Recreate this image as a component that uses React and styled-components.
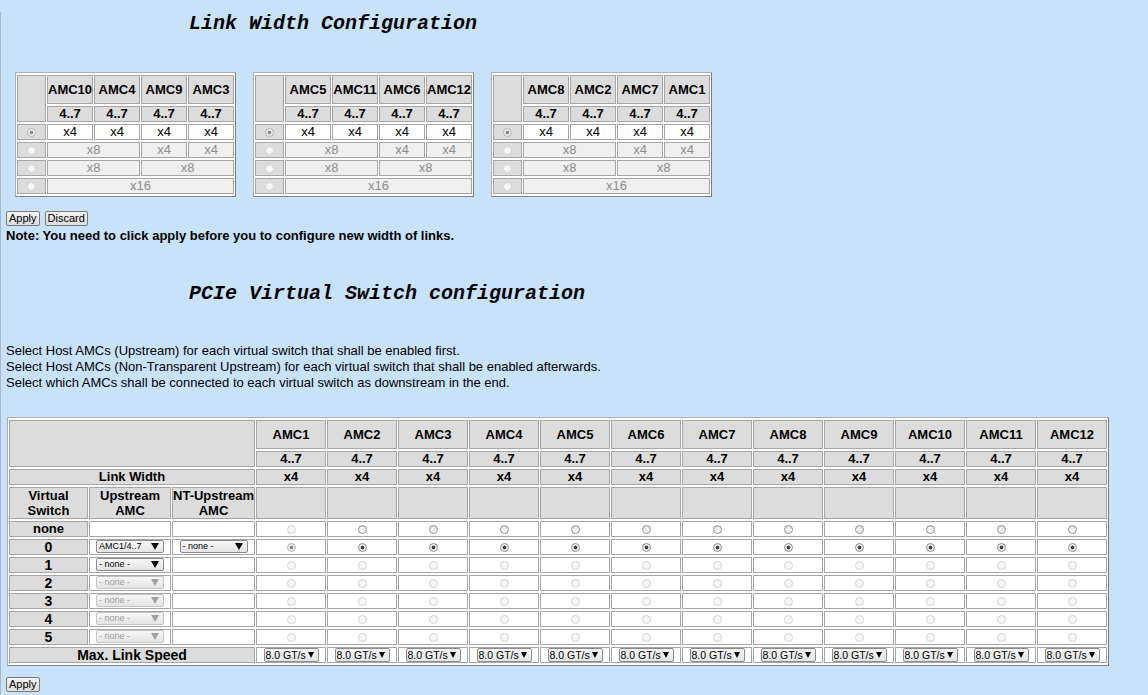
import React from "react";
import styled, { createGlobalStyle } from "styled-components";

const GlobalStyle = createGlobalStyle`
  html, body {
    margin: 0;
    padding: 0;
    background: #c9e2fb;
  }
  body {
    font-family: "Liberation Sans", Arial, sans-serif;
    font-size: 13px;
    color: #000;
  }
`;

const widthGroups = [
  ["AMC10", "AMC4", "AMC9", "AMC3"],
  ["AMC5", "AMC11", "AMC6", "AMC12"],
  ["AMC8", "AMC2", "AMC7", "AMC1"],
];

const amcs = Array.from({ length: 12 }, (_, i) => `AMC${i + 1}`);
const switches = ["none", "0", "1", "2", "3", "4", "5"];

const LinkWidthTable = ({ names }) => {
  return (
    <SmallTable>
      <colgroup>
        <Col $w={29} />
        {names.map((n) => (
          <Col key={n} $w={46} />
        ))}
      </colgroup>
      <tbody>
        <Row $h={29}>
          <Cell rowSpan={2} $tone="head" />
          {names.map((n) => (
            <Cell key={n} $tone="head" $bold>
              {n}
            </Cell>
          ))}
        </Row>
        <Row $h={16}>
          {names.map((n) => (
            <Cell key={n} $tone="head" $bold>
              4..7
            </Cell>
          ))}
        </Row>
        <Row $h={16}>
          <Cell $tone="head">
            <Radio $checked $dim />
          </Cell>
          {names.map((n) => (
            <Cell key={n} $tone="white">
              x4
            </Cell>
          ))}
        </Row>
        <Row $h={16}>
          <Cell $tone="head">
            <Radio $faint />
          </Cell>
          <Cell colSpan={2} $tone="light">
            x8
          </Cell>
          <Cell $tone="light">x4</Cell>
          <Cell $tone="light">x4</Cell>
        </Row>
        <Row $h={16}>
          <Cell $tone="head">
            <Radio $faint />
          </Cell>
          <Cell colSpan={2} $tone="light">
            x8
          </Cell>
          <Cell colSpan={2} $tone="light">
            x8
          </Cell>
        </Row>
        <Row $h={16}>
          <Cell $tone="head">
            <Radio $faint />
          </Cell>
          <Cell colSpan={4} $tone="light">
            x16
          </Cell>
        </Row>
      </tbody>
    </SmallTable>
  );
};

const FakeSelect = ({ label, width, disabled, big }) => (
  <Select $w={width} $disabled={disabled} $big={big}>
    <span>{label}</span>
    <Arrow $disabled={disabled} $big={big} />
  </Select>
);

const App = () => {
  return (
    <>
      <GlobalStyle />
      <Page>
        <Title $top={12}>Link Width Configuration</Title>

        <SmallTables>
          {widthGroups.map((g) => (
            <LinkWidthTable key={g[0]} names={g} />
          ))}
        </SmallTables>

        <ButtonRow $top={14}>
          <Button>Apply</Button>
          <Button>Discard</Button>
        </ButtonRow>
        <Note>
          Note: You need to click apply before you to configure new width of
          links.
        </Note>

        <Title $top={39}>PCIe Virtual Switch configuration</Title>

        <Intro>
          Select Host AMCs (Upstream) for each virtual switch that shall be
          enabled first.
          <br />
          Select Host AMCs (Non-Transparent Upstream) for each virtual switch
          that shall be enabled afterwards.
          <br />
          Select which AMCs shall be connected to each virtual switch as
          downstream in the end.
        </Intro>

        <SwitchTable>
          <colgroup>
            <Col $w={79} />
            <Col $w={82} />
            <Col $w={83} />
            {amcs.map((a) => (
              <Col key={a} $w={70} />
            ))}
          </colgroup>
          <tbody>
            <Row $h={29}>
              <Cell colSpan={3} rowSpan={2} $tone="head" />
              {amcs.map((a) => (
                <Cell key={a} $tone="head" $bold>
                  {a}
                </Cell>
              ))}
            </Row>
            <Row $h={16}>
              {amcs.map((a) => (
                <Cell key={a} $tone="head" $bold>
                  4..7
                </Cell>
              ))}
            </Row>
            <Row $h={16}>
              <Cell colSpan={3} $tone="head" $bold>
                Link Width
              </Cell>
              {amcs.map((a) => (
                <Cell key={a} $tone="head" $bold>
                  x4
                </Cell>
              ))}
            </Row>
            <Row $h={31}>
              <Cell $tone="head" $bold $multi>
                Virtual
                <br />
                Switch
              </Cell>
              <Cell $tone="head" $bold $multi>
                Upstream
                <br />
                AMC
              </Cell>
              <Cell $tone="head" $bold $multi>
                NT-Upstream
                <br />
                AMC
              </Cell>
              {amcs.map((a) => (
                <Cell key={a} $tone="head" />
              ))}
            </Row>
            {switches.map((s) => (
              <Row key={s} $h={16}>
                <Cell $tone="head" $bold $large={s !== "none"}>
                  {s}
                </Cell>
                <Cell $tone="white">
                  {s === "0" && <FakeSelect label="AMC1/4..7" width={68} />}
                  {s !== "0" && s !== "none" && (
                    <FakeSelect
                      label="- none -"
                      width={68}
                      disabled={s !== "1"}
                    />
                  )}
                </Cell>
                <Cell $tone="white">
                  {s === "0" && <FakeSelect label="- none -" width={68} />}
                </Cell>
                {amcs.map((a, i) => (
                  <Cell key={a} $tone="white">
                    {s === "none" && <Radio $faint={i === 0} />}
                    {s === "0" && <Radio $checked $dim={i === 0} />}
                    {s !== "none" && s !== "0" && <Radio $faint />}
                  </Cell>
                ))}
              </Row>
            ))}
            <Row $h={16}>
              <Cell colSpan={3} $tone="head" $bold $large>
                Max. Link Speed
              </Cell>
              {amcs.map((a) => (
                <Cell key={a} $tone="white">
                  <FakeSelect label="8.0 GT/s" width={55} big />
                </Cell>
              ))}
            </Row>
          </tbody>
        </SwitchTable>

        <ButtonRow $top={11}>
          <Button>Apply</Button>
        </ButtonRow>
      </Page>
    </>
  );
};

const Page = styled.div`
  box-sizing: border-box;
  min-height: 695px;
  border-left: 1px solid #a9b6c4;
  padding: 0 5px 8px;
`;

const Title = styled.h2`
  margin: ${(p) => p.$top}px 0 0;
  padding-left: 183px;
  font-family: "Liberation Mono", "Courier New", monospace;
  font-style: italic;
  font-weight: bold;
  font-size: 20px;
  line-height: 23px;
`;

const SmallTables = styled.div`
  display: flex;
  gap: 17px;
  margin: 37px 0 0 9px;
`;

const tones = {
  head: "#dcdcdc",
  white: "#ffffff",
  light: "#efefef",
};

const BaseTable = styled.table`
  table-layout: fixed;
  border-collapse: separate;
  border-spacing: 1px 2px;
  background: #fff;
  border: 1px solid;
  border-color: #b0b0b0 #7f7f7f #7f7f7f #b0b0b0;
`;

const SmallTable = styled(BaseTable)`
  width: 221px;
`;

const SwitchTable = styled(BaseTable)`
  width: 1102px;
  margin: 26px 0 0 1px;
`;

const Col = styled.col`
  width: ${(p) => p.$w}px;
`;

const Row = styled.tr`
  height: ${(p) => p.$h}px;
`;

const Cell = styled.td`
  box-sizing: border-box;
  padding: 0;
  border: 1px solid #a6a6a6;
  background: ${(p) => tones[p.$tone]};
  color: ${(p) => (p.$tone === "light" ? "#8c8c8c" : "#000")};
  font-weight: ${(p) => (p.$bold ? "bold" : "normal")};
  font-size: ${(p) => (p.$large ? "14px" : "13px")};
  line-height: ${(p) => (p.$multi ? "15px" : "14px")};
  text-align: center;
  vertical-align: middle;
  white-space: nowrap;
  overflow: hidden;
`;

const Radio = styled.span`
  display: inline-block;
  box-sizing: border-box;
  width: 9px;
  height: 9px;
  border-radius: 50%;
  vertical-align: middle;
  border: 1px solid
    ${(p) => (p.$faint ? "#d2d2d2" : p.$dim ? "#b4b4b4" : "#8e8e8e")};
  background: ${(p) =>
    p.$checked
      ? `radial-gradient(circle, ${p.$dim ? "#8a8a8a" : "#404040"} 0 1.6px, #ececec 2.2px)`
      : p.$faint
      ? "#f6f6f6"
      : "linear-gradient(#e4e4e4, #fafafa)"};
`;

const Select = styled.span`
  display: inline-flex;
  align-items: center;
  justify-content: space-between;
  box-sizing: border-box;
  width: ${(p) => p.$w}px;
  height: ${(p) => (p.$big ? 14 : 13)}px;
  padding: ${(p) => (p.$big ? "0 4px 0 1px" : "0 4px 0 2px")};
  border: 1px solid ${(p) => (p.$disabled ? "#c4c4c4" : "#8c8c8c")};
  border-radius: 2px;
  background: linear-gradient(#f7f7f7, #e4e4e4);
  color: ${(p) => (p.$disabled ? "#9a9a9a" : "#000")};
  font-size: ${(p) => (p.$big ? 10.5 : 9)}px;
  font-weight: normal;
  line-height: 1;
  vertical-align: top;
  text-align: left;
`;

const Arrow = styled.span`
  flex: none;
  width: 0;
  height: 0;
  border-left: ${(p) => (p.$big ? 3.5 : 4)}px solid transparent;
  border-right: ${(p) => (p.$big ? 3.5 : 4)}px solid transparent;
  border-top: ${(p) => (p.$big ? 6 : 7)}px solid
    ${(p) => (p.$disabled ? "#a0a0a0" : "#000")};
`;

const ButtonRow = styled.div`
  display: flex;
  gap: 5px;
  margin-top: ${(p) => p.$top}px;
`;

const Button = styled.button`
  box-sizing: border-box;
  height: 15px;
  padding: 0 2px;
  border: 1px solid #7a7a7a;
  border-radius: 2px;
  background: linear-gradient(#f4f4f4, #dcdcdc);
  font-family: "Liberation Sans", Arial, sans-serif;
  font-size: 11px;
  line-height: 13px;
  color: #000;
`;

const Note = styled.div`
  margin-top: 2px;
  font-weight: bold;
  font-size: 13px;
  line-height: 15px;
`;

const Intro = styled.p`
  margin: 38px 0 0;
  font-size: 13px;
  line-height: 16px;
`;

export default App;
